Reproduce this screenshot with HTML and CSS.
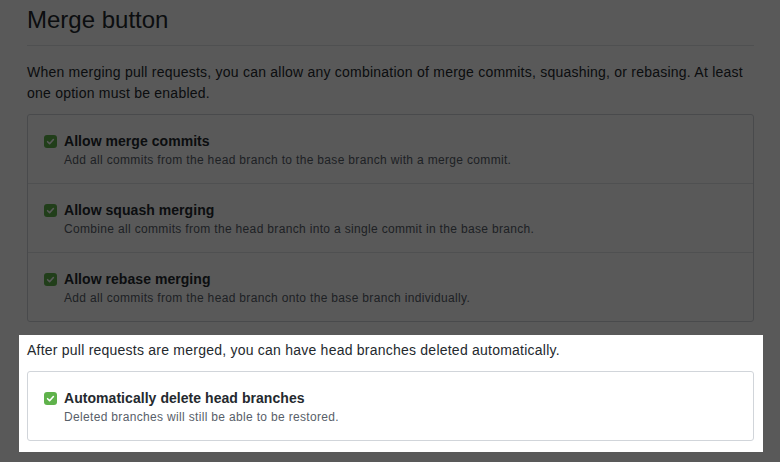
FILE: index.html
```html
<!DOCTYPE html>
<html>
<head>
<meta charset="utf-8">
<link rel="stylesheet" href="styles.css">
</head>
<body>
<div class="page">
  <h2 class="heading">Merge button</h2>
  <p class="intro">When merging pull requests, you can allow any combination of merge commits, squashing, or rebasing. At least one option must be enabled.</p>
  <div class="box">
    <div class="row">
      <div class="opt">
        <span class="check"><svg viewBox="0 0 13 13" width="13" height="13"><path d="M3.6 6.7 5.6 8.7 9.4 4.5" fill="none" stroke="#fff" stroke-width="1.6" stroke-linecap="round" stroke-linejoin="round"/></svg></span>
        <div class="text">
          <div class="title">Allow merge commits</div>
          <div class="desc">Add all commits from the head branch to the base branch with a merge commit.</div>
        </div>
      </div>
    </div>
    <div class="row">
      <div class="opt">
        <span class="check"><svg viewBox="0 0 13 13" width="13" height="13"><path d="M3.6 6.7 5.6 8.7 9.4 4.5" fill="none" stroke="#fff" stroke-width="1.6" stroke-linecap="round" stroke-linejoin="round"/></svg></span>
        <div class="text">
          <div class="title">Allow squash merging</div>
          <div class="desc">Combine all commits from the head branch into a single commit in the base branch.</div>
        </div>
      </div>
    </div>
    <div class="row">
      <div class="opt">
        <span class="check"><svg viewBox="0 0 13 13" width="13" height="13"><path d="M3.6 6.7 5.6 8.7 9.4 4.5" fill="none" stroke="#fff" stroke-width="1.6" stroke-linecap="round" stroke-linejoin="round"/></svg></span>
        <div class="text">
          <div class="title">Allow rebase merging</div>
          <div class="desc">Add all commits from the head branch onto the base branch individually.</div>
        </div>
      </div>
    </div>
  </div>
  <div class="spotlight">
    <p class="note">After pull requests are merged, you can have head branches deleted automatically.</p>
    <div class="box">
      <div class="row">
        <div class="opt">
          <span class="check"><svg viewBox="0 0 13 13" width="13" height="13"><path d="M3.6 6.7 5.6 8.7 9.4 4.5" fill="none" stroke="#fff" stroke-width="1.6" stroke-linecap="round" stroke-linejoin="round"/></svg></span>
          <div class="text">
            <div class="title">Automatically delete head branches</div>
            <div class="desc">Deleted branches will still be able to be restored.</div>
          </div>
        </div>
      </div>
    </div>
  </div>
</div>
</body>
</html>
```
FILE: styles.css
```css
html, body {
  margin: 0;
  padding: 0;
  background: #ffffff;
  overflow: hidden;
}
body {
  font-family: "Liberation Sans", Arial, sans-serif;
  color: #24292e;
  width: 780px;
  height: 462px;
}
.page {
  padding: 5px 26px 0 27px;
}
.heading {
  margin: 0;
  font-size: 24px;
  font-weight: 400;
  line-height: 30px;
  padding-bottom: 10px;
  border-bottom: 1px solid #e1e4e8;
}
.intro {
  margin: 16px 0 10px;
  font-size: 14px;
  line-height: 21px;
  letter-spacing: 0.23px;
}
.box {
  border: 1px solid #d1d5da;
  border-radius: 3px;
  background: #fff;
}
.row {
  padding: 16px 16px 14px;
  border-top: 1px solid #e1e4e8;
}
.row:first-child {
  border-top: none;
}
.opt {
  display: flex;
  align-items: flex-start;
  gap: 7px;
}
.check {
  flex: none;
  width: 13px;
  height: 13px;
  margin-top: 4px;
  border-radius: 3px;
  background: #5fb24b;
  display: flex;
}
.title {
  font-size: 14px;
  font-weight: 700;
  line-height: 20px;
  letter-spacing: 0.05px;
}
.desc {
  font-size: 12px;
  line-height: 18px;
  color: #586069;
  letter-spacing: 0.33px;
}
.spotlight {
  position: relative;
  z-index: 1;
  margin: 13px -9px 0 -8px;
  padding: 5px 9px 11px 8px;
  background: #fff;
  box-shadow: 0 0 0 2000px rgba(0, 0, 0, 0.65);
}
.note {
  margin: 0 0 10px;
  font-size: 14px;
  line-height: 21px;
  letter-spacing: 0.23px;
}
```
